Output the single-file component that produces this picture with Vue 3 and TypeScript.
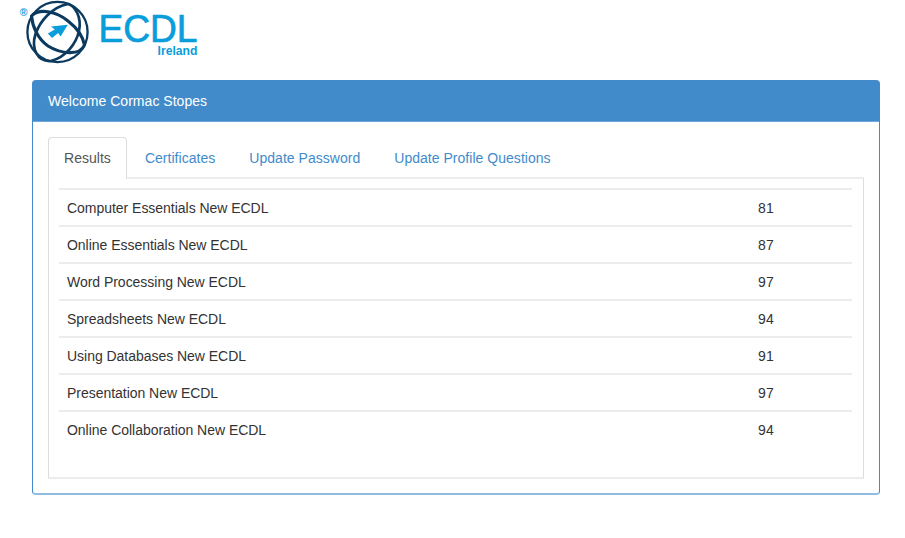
<script setup lang="ts">
import { ref } from 'vue'

interface Result {
  module: string
  score: number
}

const tabs: string[] = ['Results', 'Certificates', 'Update Password', 'Update Profile Questions']
const active = ref(0)

const results: Result[] = [
  { module: 'Computer Essentials New ECDL', score: 81 },
  { module: 'Online Essentials New ECDL', score: 87 },
  { module: 'Word Processing New ECDL', score: 97 },
  { module: 'Spreadsheets New ECDL', score: 94 },
  { module: 'Using Databases New ECDL', score: 91 },
  { module: 'Presentation New ECDL', score: 97 },
  { module: 'Online Collaboration New ECDL', score: 94 },
]
</script>

<template>
  <div class="page">
    <header class="brand">
      <svg class="logo" width="190" height="66" viewBox="0 0 190 66">
        <g fill="none" stroke="#0b3a5e" stroke-linejoin="round">
          <circle cx="42.5" cy="32" r="30.1" stroke-width="2.3" />
          <path d="M16.5 16 C24 8 41 11 53 21 C62 28 68 37 69.5 45 C65 56 46 54 33 46 C23 39 17.5 27 16.5 16 Z" stroke-width="3.1" />
          <path d="M53 4 C60 6 67 17 64 31 C61 44 51 57 36 61 C22 62 16 48 20.5 34 C25 21 37 7 53 4 Z" stroke-width="2.7" />
        </g>
        <path d="M52.8 24.8 L36 26.4 L39.8 29.4 L32.8 33.4 L37 38 L43.2 33 L45.6 36.4 Z" fill="#0a9ddb" />
        <text class="reg" x="4.8" y="16.2">®</text>
        <text class="name" x="83.5" y="42" textLength="99" lengthAdjust="spacingAndGlyphs">ECDL</text>
        <text class="country" x="142.5" y="55" textLength="40" lengthAdjust="spacingAndGlyphs">Ireland</text>
      </svg>
    </header>
    <section class="panel">
      <div class="panel-heading">Welcome Cormac Stopes</div>
      <div class="panel-body">
        <ul class="tabs">
          <li v-for="(tab, i) in tabs" :key="tab">
            <a :class="{ active: i === active }" @click="active = i">{{ tab }}</a>
          </li>
        </ul>
        <div class="content">
          <table>
            <tbody>
              <tr v-for="row in results" :key="row.module">
                <td>{{ row.module }}</td>
                <td class="score">{{ row.score }}</td>
              </tr>
            </tbody>
          </table>
        </div>
      </div>
    </section>
  </div>
</template>

<style>
body {
  background: #fff;
}
</style>

<style scoped>
* {
  box-sizing: border-box;
}
.page {
  height: 538px;
  overflow: hidden;
  font: 14px/20px 'Liberation Sans', Arial, sans-serif;
  letter-spacing: 0.03px;
  color: #333;
}
.brand {
  height: 80px;
  padding-left: 15px;
  letter-spacing: 0;
}
.logo {
  display: block;
}
.logo text {
  fill: #0a9ddb;
}
.reg {
  font-size: 10.5px;
  font-weight: bold;
}
.name {
  font-size: 38px;
  stroke: #0a9ddb;
  stroke-width: 0.7px;
}
.country {
  font-size: 12px;
  font-weight: bold;
}
.panel {
  width: 848px;
  height: 415px;
  margin-left: 32px;
  border: 1px solid #428bca;
  border-bottom: 2px solid #8fbce1;
  border-radius: 4px;
}
.panel-heading {
  height: 41px;
  padding: 10px 15px;
  border-bottom: 1px solid #6da6d8;
  background: #428bca;
  color: #fff;
}
.panel-body {
  padding: 15px;
}
.tabs {
  display: flex;
  gap: 2px;
  height: 42px;
  margin: 0;
  padding: 0;
  list-style: none;
  border-bottom: 2px solid #ececec;
}
.tabs a {
  display: block;
  height: 42px;
  padding: 10px 15px;
  border: 1px solid transparent;
  border-radius: 4px 4px 0 0;
  color: #428bca;
  cursor: pointer;
}
.tabs a.active {
  border-color: #ddd #ddd transparent;
  background: #fff;
  color: #555;
}
.content {
  height: 300px;
  padding: 9px 11px 0 10px;
  border: 1px solid #ddd;
  border-top: 0;
  border-bottom: 2px solid #ececec;
}
table {
  width: 100%;
  border-collapse: separate;
  border-spacing: 0;
  table-layout: fixed;
  letter-spacing: -0.03px;
}
td {
  height: 37px;
  padding: 8px 8px 7px;
  border-top: 2px solid #ececec;
}
.score {
  width: 102px;
  letter-spacing: 0.2px;
}
</style>
